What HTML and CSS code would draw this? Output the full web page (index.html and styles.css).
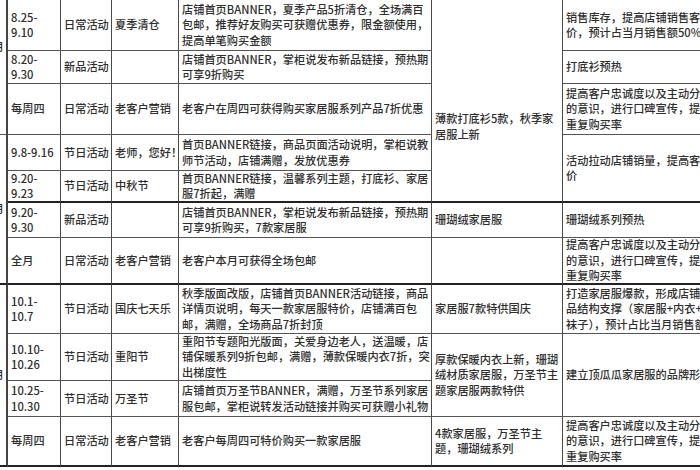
FILE: index.html
```html
<!DOCTYPE html>
<html lang="zh-CN">
<head>
<meta charset="utf-8">
<title>活动规划表</title>
<link rel="stylesheet" href="styles.css">
</head>
<body>
<div class="sheet">
  <!-- row 1 -->
  <div class="c m m1 r3"><span>8月</span></div>
  <div class="c"><span>8.25-<br>9.10</span></div>
  <div class="c"><span>日常活动</span></div>
  <div class="c"><span>夏季清仓</span></div>
  <div class="c"><span>店铺首页BANNER，夏季产品5折清仓，全场满百<br>包邮，推荐好友购买可获赠优惠券，限金额使用，<br>提高单笔购买金额</span></div>
  <div class="c r5 tb top"><span>薄款打底衫5款，秋季家<br>居服上新</span></div>
  <div class="c"><span>销售库存，提高店铺销售客单<br>价，预计占当月销售额50%</span></div>
  <!-- row 2 -->
  <div class="c"><span>8.20-<br>9.30</span></div>
  <div class="c"><span>新品活动</span></div>
  <div class="c"><span></span></div>
  <div class="c"><span>店铺首页BANNER，掌柜说发布新品链接，预热期<br>可享9折购买</span></div>
  <div class="c"><span>打底衫预热</span></div>
  <!-- row 3 -->
  <div class="c"><span>每周四</span></div>
  <div class="c"><span>日常活动</span></div>
  <div class="c"><span>老客户营销</span></div>
  <div class="c"><span>老客户在周四可获得购买家居服系列产品7折优惠</span></div>
  <div class="c"><span>提高客户忠诚度以及主动分享<br>的意识，进行口碑宣传，提高<br>重复购买率</span></div>
  <!-- row 4 -->
  <div class="c m r4 tb"><span>9月</span></div>
  <div class="c"><span>9.8-9.16</span></div>
  <div class="c"><span>节日活动</span></div>
  <div class="c"><span>老师，您好！</span></div>
  <div class="c"><span>首页BANNER链接，商品页面活动说明，掌柜说教<br>师节活动，店铺满赠，发放优惠券</span></div>
  <div class="c r2 tb"><span>活动拉动店铺销量，提高客单<br>价</span></div>
  <!-- row 5 -->
  <div class="c tb"><span>9.20-<br>9.23</span></div>
  <div class="c tb"><span>节日活动</span></div>
  <div class="c tb"><span>中秋节</span></div>
  <div class="c tb"><span>首页BANNER链接，温馨系列主题，打底衫、家居<br>服7折起，满赠</span></div>
  <!-- row 6 -->
  <div class="c"><span>9.20-<br>9.30</span></div>
  <div class="c"><span>新品活动</span></div>
  <div class="c"><span></span></div>
  <div class="c"><span>店铺首页BANNER，掌柜说发布新品链接，预热期<br>可享9折购买，7款家居服</span></div>
  <div class="c"><span>珊瑚绒家居服</span></div>
  <div class="c"><span>珊瑚绒系列预热</span></div>
  <!-- row 7 -->
  <div class="c tb"><span>全月</span></div>
  <div class="c tb"><span>日常活动</span></div>
  <div class="c tb"><span>老客户营销</span></div>
  <div class="c tb"><span>老客户本月可获得全场包邮</span></div>
  <div class="c tb"><span></span></div>
  <div class="c tb"><span>提高客户忠诚度以及主动分享<br>的意识，进行口碑宣传，提高<br>重复购买率</span></div>
  <!-- row 8 -->
  <div class="c m r4 tb"><span>10月</span></div>
  <div class="c"><span>10.1-<br>10.7</span></div>
  <div class="c"><span>节日活动</span></div>
  <div class="c"><span>国庆七天乐</span></div>
  <div class="c"><span>秋季版面改版，店铺首页BANNER活动链接，商品<br>详情页说明，每天一款家居服特价，店铺满百包<br>邮，满赠，全场商品7折封顶</span></div>
  <div class="c"><span>家居服7款特供国庆</span></div>
  <div class="c"><span>打造家居服爆款，形成店铺产<br>品结构支撑（家居服+内衣+<br>袜子），预计占比当月销售额</span></div>
  <!-- row 9 -->
  <div class="c"><span>10.10-<br>10.26</span></div>
  <div class="c"><span>节日活动</span></div>
  <div class="c"><span>重阳节</span></div>
  <div class="c"><span>重阳节专题阳光版面，关爱身边老人，送温暖，店<br>铺保暖系列9折包邮，满赠，薄款保暖内衣7折，突<br>出梯度性</span></div>
  <div class="c r2"><span>厚款保暖内衣上新，珊瑚<br>绒材质家居服，万圣节主<br>题家居服两款特供</span></div>
  <div class="c r2"><span>建立顶瓜瓜家居服的品牌形象</span></div>
  <!-- row 10 -->
  <div class="c"><span>10.25-<br>10.30</span></div>
  <div class="c"><span>节日活动</span></div>
  <div class="c"><span>万圣节</span></div>
  <div class="c"><span>店铺首页万圣节BANNER，满赠，万圣节系列家居<br>服包邮，掌柜说转发活动链接并购买可获赠小礼物</span></div>
  <!-- row 11 -->
  <div class="c tb"><span>每周四</span></div>
  <div class="c tb"><span>日常活动</span></div>
  <div class="c tb"><span>老客户营销</span></div>
  <div class="c tb"><span>老客户每周四可特价购买一款家居服</span></div>
  <div class="c tb"><span>4款家居服，万圣节主<br>题，珊瑚绒系列</span></div>
  <div class="c tb"><span>提高客户忠诚度以及主动分享<br>的意识，进行口碑宣传，提高<br>重复购买率</span></div>
</div>
</body>
</html>
```

FILE: styles.css
```css
html, body {
  margin: 0;
  padding: 0;
  background: #fff;
}

body {
  width: 700px;
  height: 470px;
  overflow: hidden;
}

.sheet {
  display: grid;
  grid-template-columns: 8px 53px 51px 67px 253px 131px 200px;
  grid-template-rows: 51px 33px 51px 36px 32px 35px 47px 49px 47px 36px 50px;
  font-family: "Noto Sans CJK SC", "Noto Sans", sans-serif;
  font-size: 11.2px;
  font-weight: 500;
  line-height: 15.5px;
  color: #2e2e2e;
}

.c {
  box-sizing: border-box;
  display: flex;
  align-items: center;
  padding: 0 3px;
  border-right: 1px solid #4a4a4a;
  border-bottom: 1px solid #555;
  white-space: nowrap;
  overflow: hidden;
  min-width: 0;
}

.c.tb {
  border-bottom: 2px solid #222;
}

.r2 { grid-row: span 2; }
.r3 { grid-row: span 3; }
.r4 { grid-row: span 4; }
.r5 { grid-row: span 5; }

.top {
  align-items: flex-start;
  padding-top: 111px;
}

.m {
  justify-content: flex-end;
  padding: 0 2px 0 0;
  overflow: visible;
  border-right: 2px solid #444;
}

.m1 {
  padding-bottom: 40px;
}
```
